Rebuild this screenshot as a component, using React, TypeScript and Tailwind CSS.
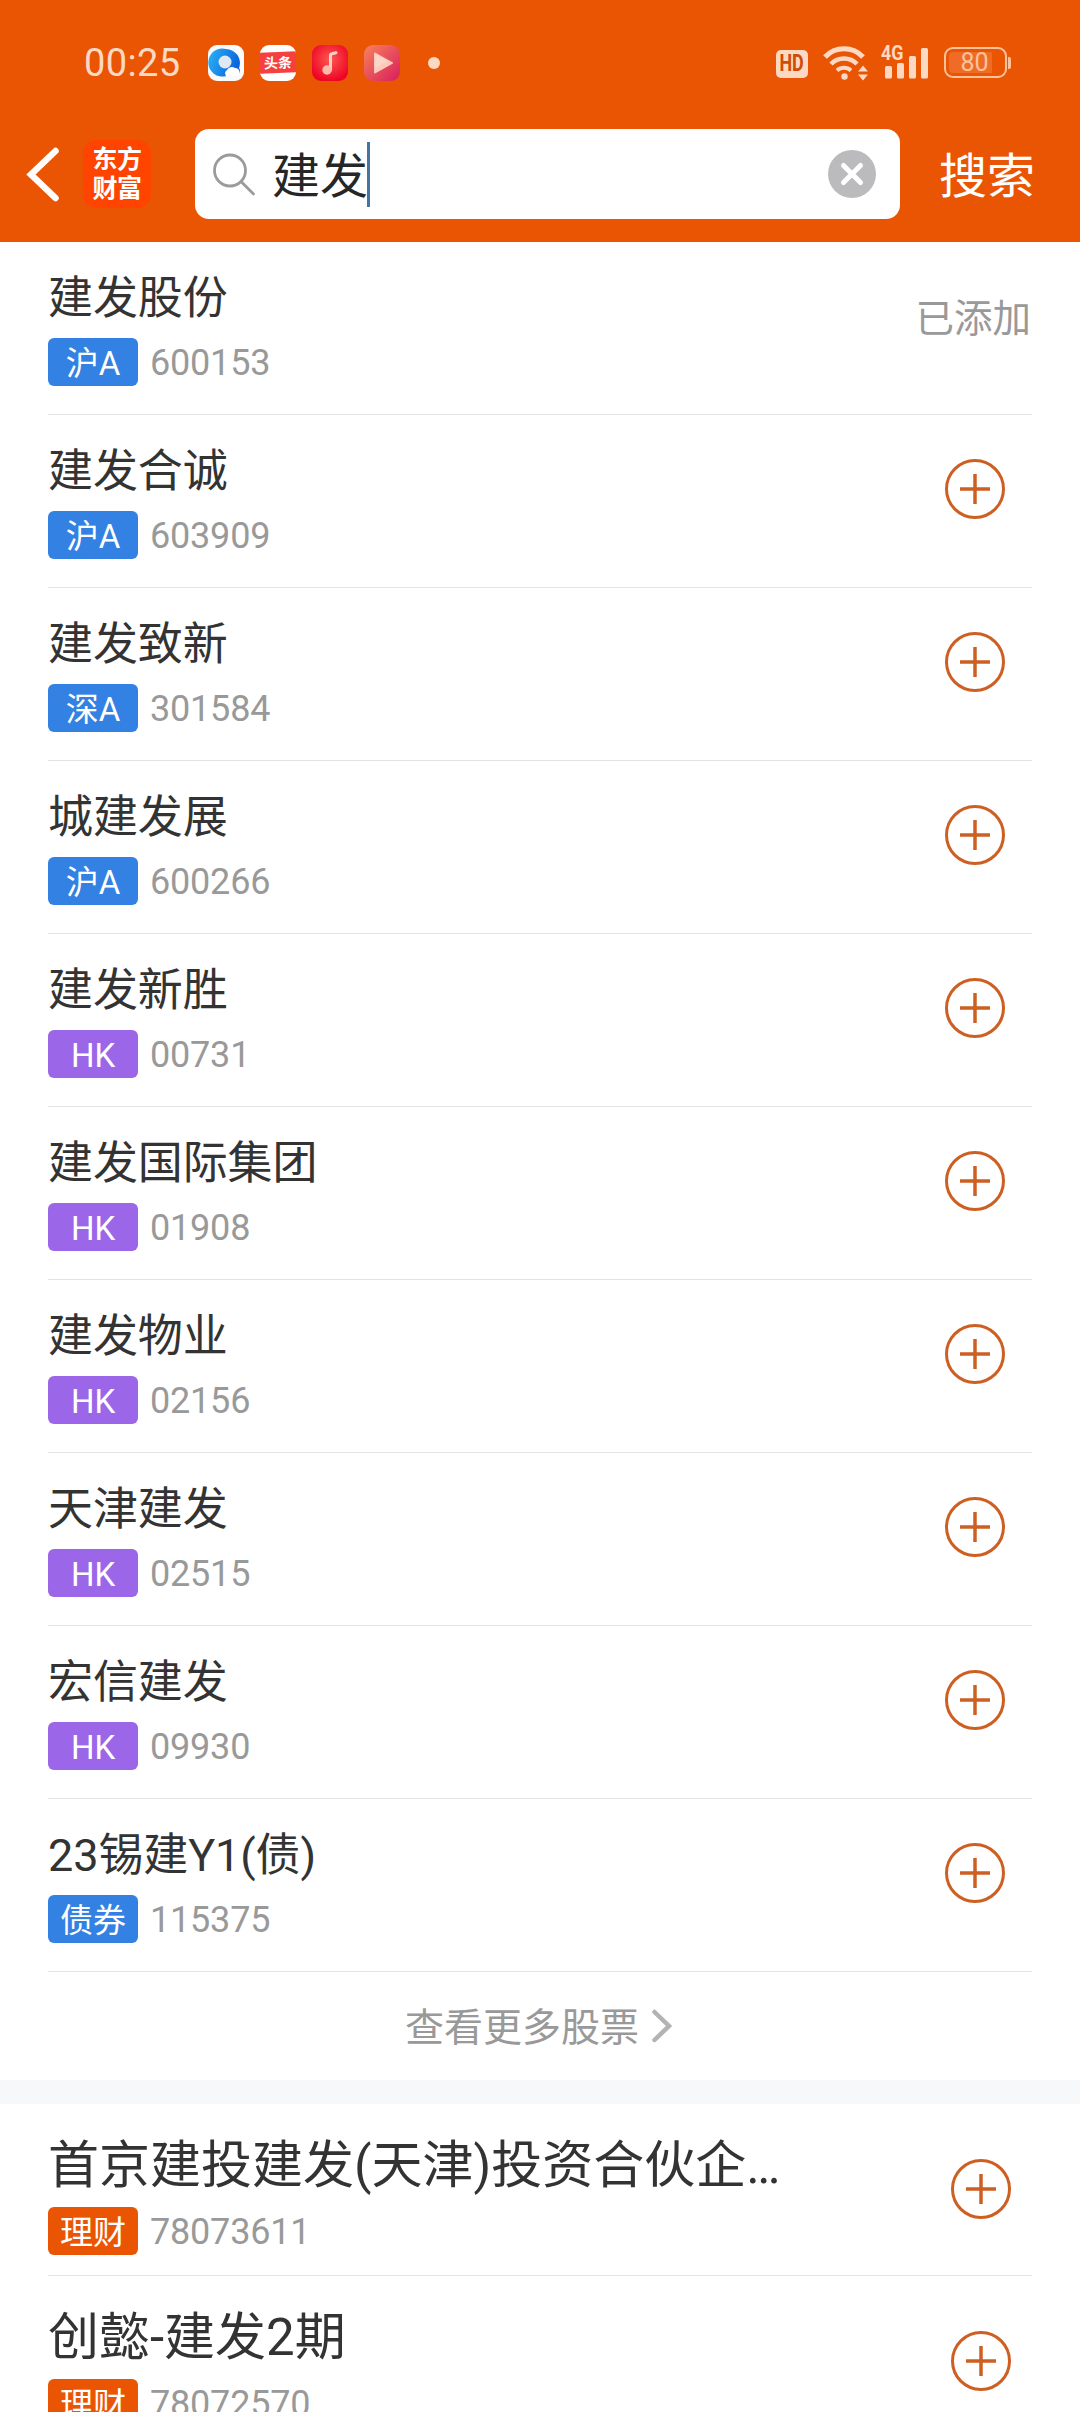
type Kind = '沪A' | '深A' | 'HK' | '债券' | '理财';

interface Item {
    name: string;
    code: string;
    kind: Kind;
    added?: boolean;
}

const stocks: Item[] = [
    { name: '建发股份', code: '600153', kind: '沪A', added: true },
    { name: '建发合诚', code: '603909', kind: '沪A' },
    { name: '建发致新', code: '301584', kind: '深A' },
    { name: '城建发展', code: '600266', kind: '沪A' },
    { name: '建发新胜', code: '00731', kind: 'HK' },
    { name: '建发国际集团', code: '01908', kind: 'HK' },
    { name: '建发物业', code: '02156', kind: 'HK' },
    { name: '天津建发', code: '02515', kind: 'HK' },
    { name: '宏信建发', code: '09930', kind: 'HK' },
    { name: '23锡建Y1(债)', code: '115375', kind: '债券' },
];

const funds: Item[] = [
    { name: '首京建投建发(天津)投资合伙企…', code: '78073611', kind: '理财' },
    { name: '创懿-建发2期', code: '78072570', kind: '理财' },
];

const tagColors: Record<Kind, string> = {
    沪A: 'bg-[#3381e3]',
    深A: 'bg-[#3381e3]',
    HK: 'bg-[#9b67e8]',
    债券: 'bg-[#3381e3]',
    理财: 'bg-[#ea5504]',
};

function AppIcons() {
    return (
        <div className="flex items-center gap-4 ml-[27px] mt-px">
            {/* QQ browser */}
            <svg className="size-9" viewBox="0 0 36 36">
                <defs>
                    <linearGradient id="qb" x1="0" y1="0" x2="1" y2="0.3">
                        <stop offset="0" stopColor="#2bb4f6" />
                        <stop offset="1" stopColor="#0b66dd" />
                    </linearGradient>
                </defs>
                <rect width="36" height="36" rx="9" fill="#f8fafc" />
                <path d="M18 4a14 14 0 1 0 0 27h9a5 5 0 0 0 4-8A14 14 0 0 0 18 4Z" fill="url(#qb)" />
                <circle cx="17" cy="17" r="6.500" fill="#dfe8f3" />
                <path d="M18 31a4.500 4.500 0 0 1 1-6 5.500 5.500 0 0 1 8-2 4.500 4.500 0 0 1 3 8Z" fill="#ffffff" />
            </svg>
            {/* Toutiao */}
            <div className="size-9 rounded-[9px] bg-white flex items-center justify-center overflow-hidden">
                <div className="w-full h-[21px] shrink-0 bg-[#f5403f] -skew-y-2 flex items-center justify-center text-white text-[14px] leading-none font-bold">
                    头条
                </div>
            </div>
            {/* Music */}
            <svg className="size-9" viewBox="0 0 36 36">
                <defs>
                    <radialGradient id="mu" cx="0.5" cy="0.4" r="0.6">
                        <stop offset="0" stopColor="#fc5a50" />
                        <stop offset="1" stopColor="#ee0526" />
                    </radialGradient>
                </defs>
                <rect width="36" height="36" rx="9" fill="url(#mu)" />
                <path d="M18.500 25V10.500q0-1.500 1.500-1.800l4-1" fill="none" stroke="#ffcfc2" strokeWidth="3" strokeLinecap="round" />
                <circle cx="15" cy="25" r="4.700" fill="#ffb9aa" />
            </svg>
            {/* Video */}
            <svg className="size-9" viewBox="0 0 36 36">
                <defs>
                    <linearGradient id="vd" x1="0" y1="0" x2="1" y2="1">
                        <stop offset="0" stopColor="#f8825c" />
                        <stop offset="1" stopColor="#d81d5c" />
                    </linearGradient>
                </defs>
                <rect width="36" height="36" rx="9" fill="url(#vd)" />
                <path d="M11 8.500v19L28 18Z" fill="#fdc9ba" stroke="#fdc9ba" strokeWidth="2" strokeLinejoin="round" />
                <path d="M11 8.500v15L24 16Z" fill="#fbe0d6" opacity="0.500" />
            </svg>
            <span className="size-3 rounded-full bg-[#fdd9c3] ml-3" />
        </div>
    );
}

function StatusBar() {
    return (
        <div className="h-[124px] flex items-center pl-[84px] pr-[69px] text-[#fdd9c3]">
            <span className="text-[38px] leading-none w-[97px] tracking-[0.4px] mt-0.5">00:25</span>
            <AppIcons />
            <div className="ml-auto flex items-center mt-px">
                <span className="w-8 h-7 rounded-[5px] bg-[#fdd9c3] flex items-center justify-center mt-0.5">
                    <span className="text-[#cf4c06] text-[23px] leading-none font-bold scale-x-[.78]">HD</span>
                </span>
                <svg className="w-[46px] h-9 ml-[15px]" viewBox="0 0 46 36" fill="none" stroke="#fdd9c3">
                    <path d="M2 12a26 26 0 0 1 38 0" strokeWidth="5" />
                    <path d="M8 19a18 18 0 0 1 26 0" strokeWidth="4.500" />
                    <path d="M14 25.500a10.500 10.500 0 0 1 14 0" strokeWidth="4" />
                    <circle cx="21.500" cy="31.500" r="3.200" fill="#fdd9c3" stroke="none" />
                    <path d="M35 26.500l5-6 5 6ZM35 29.500l5 6 5-6Z" fill="#fdd9c3" stroke="none" />
                </svg>
                <div className="relative ml-3 w-[50px] h-9">
                    <span className="absolute left-0 -top-0.5 text-[21px] leading-none font-bold scale-x-[.85] origin-left">4G</span>
                    <svg className="w-[50px] h-9" viewBox="0 0 50 36" fill="#fdd9c3">
                        <rect x="4" y="21" width="7" height="12.500" rx="1.500" />
                        <rect x="16" y="18" width="7" height="15.500" rx="1.500" />
                        <rect x="28" y="11" width="7" height="22.500" rx="1.500" />
                        <rect x="40" y="3" width="7" height="30.500" rx="1.500" />
                    </svg>
                </div>
                <div className="ml-[13px] w-[63px] h-[31px] rounded-[9px] border-2 border-[#fdc29a] p-[3px]">
                    <div className="w-[43px] h-full bg-[#ee6c26] rounded-l-[4px] pl-2 flex items-center justify-center text-[25px] leading-none text-[#fdc29a]">
                        80
                    </div>
                </div>
                <span className="w-[3px] h-3 rounded-r-[2px] bg-[#fdc29a] ml-px" />
            </div>
        </div>
    );
}

function SearchHeader() {
    return (
        <div className="h-[118px] flex items-start text-white">
            <svg className="w-[34px] h-[56px] ml-[26px] mt-[22px]" viewBox="0 0 34 56" fill="none" stroke="#fff" strokeWidth="6.500" strokeLinecap="round">
                <path d="M29.500 5L5 28.500 29.500 52" />
            </svg>
            <div className="size-[68px] ml-[23px] mt-4 rounded-[14px] bg-[#ff4400] flex flex-col items-center justify-center text-[25px] leading-[29px] font-bold tracking-[-0.5px]">
                <span>东方</span>
                <span>财富</span>
            </div>
            <div className="w-[705px] h-[90px] ml-11 mt-[5px] bg-white rounded-[14px] flex items-center pl-[17px] pr-6">
                <svg className="w-[44px] h-[44px]" viewBox="0 0 44 44" fill="none" stroke="#9b9b9b" strokeWidth="2.800" strokeLinecap="round">
                    <circle cx="18" cy="18.500" r="15.500" />
                    <path d="M29 29.500L41.500 42" />
                </svg>
                <span className="ml-4 mt-1.5 text-[48px] leading-[64px] text-[#262626]">建发</span>
                <span className="w-[3px] h-[65px] -ml-px bg-[#44749f]" />
                <svg className="size-12 ml-auto" viewBox="0 0 48 48">
                    <circle cx="24" cy="24" r="24" fill="#bbbbbd" />
                    <path d="M15.500 15.500l17 17M32.500 15.500l-17 17" stroke="#fff" strokeWidth="5" strokeLinecap="round" />
                </svg>
            </div>
            <span className="ml-[39px] mt-[21px] text-[48px] leading-[64px]">搜索</span>
        </div>
    );
}

function AddIcon() {
    return (
        <svg className="size-[60px]" viewBox="0 0 60 60" fill="none" stroke="#cd5f22" strokeWidth="3">
            <circle cx="30" cy="30" r="28.500" />
            <path d="M15 30h30M30 15v30" strokeWidth="3.500" />
        </svg>
    );
}

function Meta({ item }: { item: Item }) {
    return (
        <div className="flex items-center">
            <span className={`w-[90px] h-12 pt-0.5 rounded-md flex items-center justify-center text-[33px] leading-none text-white ${tagColors[item.kind]}`}>
                {item.kind}
            </span>
            <span className="ml-3 mt-px text-[36px] leading-none text-[#999999] tracking-[-0.2px]">{item.code}</span>
        </div>
    );
}

function StockRow({ item }: { item: Item }) {
    return (
        <li className="h-[173px] border-b border-[#e3e3e3] flex justify-between">
            <div className="pt-[25px]">
                <div className="h-[64px] mb-[7px] text-[45px] leading-[64px] text-[#333333] tracking-[-0.1px]">{item.name}</div>
                <Meta item={item} />
            </div>
            {item.added ? (
                <span className="mt-[47px] mr-px text-[38.500px] leading-[60px] text-[#999999]">已添加</span>
            ) : (
                <div className="mt-11 mr-[27px]">
                    <AddIcon />
                </div>
            )}
        </li>
    );
}

function FundRow({ item }: { item: Item }) {
    return (
        <li className="h-[172px] border-b border-[#e3e3e3] flex justify-between">
            <div className="pt-[26px]">
                <div className="h-[72px] mb-[5px] text-[51px] leading-[72px] text-[#333333]">{item.name}</div>
                <Meta item={item} />
            </div>
            <div className="mt-[55px] mr-[21px]">
                <AddIcon />
            </div>
        </li>
    );
}

export default function App() {
    return (
        <div className="w-[1080px] h-[2412px] overflow-hidden bg-white font-[Roboto,'Noto_Sans_CJK_SC',sans-serif]">
            <header className="bg-[#ea5504]">
                <StatusBar />
                <SearchHeader />
            </header>
            <ul className="px-12">
                {stocks.map((item) => (
                    <StockRow key={item.code} item={item} />
                ))}
            </ul>
            <div className="h-[108px] flex items-center justify-center text-[#999999] text-[39px] leading-none">
                <span className="mt-1">查看更多股票</span>
                <svg className="w-[22px] h-[36px] ml-3 mr-0.5" viewBox="0 0 22 36" fill="none" stroke="#b3b3b3" strokeWidth="4.500" strokeLinecap="round">
                    <path d="M3.500 4L18 18 3.500 32" />
                </svg>
            </div>
            <div className="h-6 bg-[#f7f8fa]" />
            <ul className="px-12">
                {funds.map((item) => (
                    <FundRow key={item.code} item={item} />
                ))}
            </ul>
        </div>
    );
}
